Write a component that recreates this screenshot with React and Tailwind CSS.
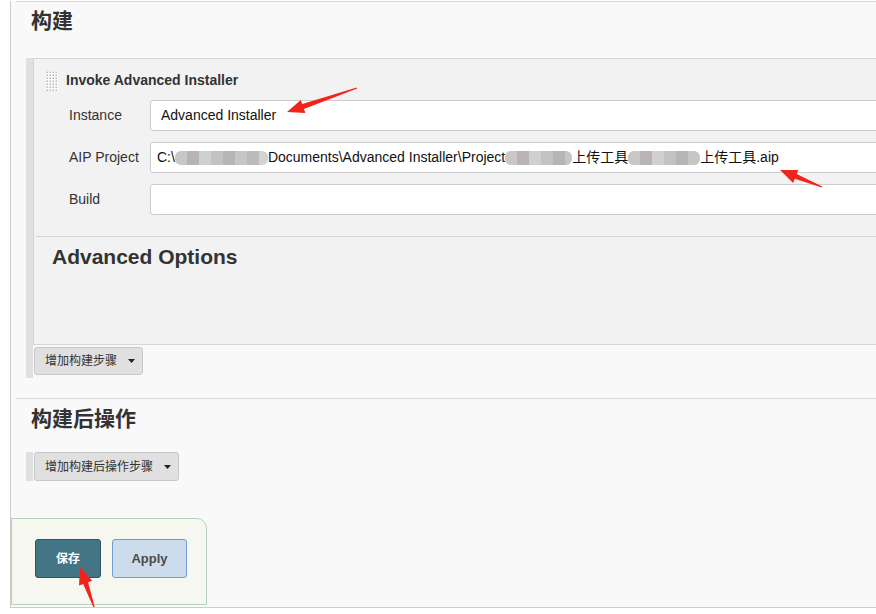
import React from "react";

// red annotation arrow, tip first then tail
function arrowPoints(tip, tail) {
  const dx = tail[0] - tip[0];
  const dy = tail[1] - tip[1];
  const len = Math.hypot(dx, dy);
  const ux = dx / len;
  const uy = dy / len;
  const nx = -uy;
  const ny = ux;
  const hl = 17;
  const hw = 7;
  const sw = 2.6;
  const bx = tip[0] + ux * hl;
  const by = tip[1] + uy * hl;
  const pts = [
    [tip[0], tip[1]],
    [bx + nx * hw, by + ny * hw],
    [bx + nx * sw, by + ny * sw],
    [tail[0] + nx * 0.6, tail[1] + ny * 0.6],
    [tail[0] - nx * 0.6, tail[1] - ny * 0.6],
    [bx - nx * sw, by - ny * sw],
    [bx - nx * hw, by - ny * hw],
  ];
  return pts.map((p) => p[0].toFixed(1) + "," + p[1].toFixed(1)).join(" ");
}

const mosaicGrays = ["#c9c7c5", "#b9b4b2", "#cfd0d0", "#c2c1c3", "#b8b3b6", "#c6c6c4", "#bdbbb9", "#d2d3d3"];

function Mosaic({ width }) {
  const count = Math.ceil(width / 12);
  return (
    <span className="inline-flex h-[14px] items-center align-middle rounded-[6px] bg-[#f4f4f4] overflow-hidden" style={{ width }}>
      {Array.from({ length: count }).map((_, i) => (
        <span key={i} className="h-[14px] w-[12px] shrink-0" style={{ background: mosaicGrays[i % mosaicGrays.length] }} />
      ))}
    </span>
  );
}

function Handle() {
  return (
    <svg width="12" height="20" viewBox="0 0 12 20" className="shrink-0">
      <rect width="12" height="20" fill="#fafafa" />
      {Array.from({ length: 7 }).map((_, r) =>
        Array.from({ length: 4 }).map((_, c) => (
          <rect key={r + "-" + c} x={c * 3 + 0.5} y={r * 3 + 0.5} width="1.5" height="1.5" fill="#b9b9b9" />
        ))
      )}
    </svg>
  );
}

function Caret() {
  return (
    <svg width="7" height="4" viewBox="0 0 7 4" className="ml-[11px]">
      <path d="M0 0h7L3.5 4z" fill="#222" />
    </svg>
  );
}

function Row({ label, children, pl = "pl-[10px]" }) {
  return (
    <div className="flex h-[31px] mb-[11px] items-center">
      <div className="w-[81px] pl-[35px] box-content text-[14px] text-[#333] self-start pt-[5px]">{label}</div>
      <div className={`flex-1 h-[31px] flex items-center bg-white border border-[#cccccc] rounded-[3px] text-[14px] text-[#111] whitespace-nowrap ${pl}`}>
        {children}
      </div>
    </div>
  );
}

export default function App() {
  return (
    <div className="relative w-[876px] h-[614px] overflow-hidden bg-white font-['Liberation_Sans','Noto_Sans_CJK_SC',sans-serif]">
      <div className="ml-[10px] w-[1000px] h-[607px] border-l border-b border-[#cccccc] bg-[#f9f9f9]">
        {/* 构建 */}
        <div className="ml-[5px] mt-px border-t border-[#d9d9d9]">
          <h2 className="mt-[8px] pl-[15px] text-[21px] leading-[21px] font-bold text-[#333]">构建</h2>
        </div>

        <div className="ml-[15px] mt-[27px] border-l-[7px] border-[#e0e0e0] pb-[3px]">
          <div className="border-l border-t border-b border-[#d5d5d5] bg-[#f2f2f2]">
            <div className="h-[41px] flex items-center pl-[12px] pt-[2px] gap-[8px]">
              <Handle />
              <span className="text-[14px] font-bold text-[#333]">Invoke Advanced Installer</span>
            </div>
            <Row label="Instance">Advanced Installer</Row>
            <Row label="AIP Project" pl="pl-[6px]">
              <span>C:\</span>
              <Mosaic width={93} />
              <span>Documents\Advanced Installer\Project</span>
              <Mosaic width={67} />
              <span>上传工具</span>
              <Mosaic width={72} />
              <span>上传工具.aip</span>
            </Row>
            <Row label="Build"></Row>
            <div className="mt-[21px] ml-[2px] border-t border-[#d5d5d5] h-[108px]">
              <h3 className="mt-[8px] pl-[16px] text-[21px] leading-[24px] font-bold text-[#333]">Advanced Options</h3>
            </div>
          </div>
          <button className="mt-[2px] ml-px h-[28px] w-[109px] flex items-center pl-[10px] bg-[#e0e0e0] border border-[#c8c8c8] rounded-[3px] text-[12px] text-[#333]">
            增加构建步骤
            <Caret />
          </button>
        </div>

        {/* 构建后操作 */}
        <div className="ml-[5px] mt-[20px] border-t border-[#d9d9d9]">
          <h2 className="mt-[9px] pl-[15px] text-[21px] leading-[21px] font-bold text-[#333]">构建后操作</h2>
        </div>

        <div className="ml-[15px] mt-[23px] border-l-[7px] border-[#e0e0e0] w-[153px]">
          <button className="ml-px h-[29px] w-[145px] flex items-center pl-[10px] bg-[#e0e0e0] border border-[#c8c8c8] rounded-[3px] text-[12px] text-[#333]">
            增加构建后操作步骤
            <Caret />
          </button>
        </div>

        {/* bottom bar */}
        <div className="mt-[37px] w-[196px] h-[87px] border border-[#b2d4bf] rounded-tr-[10px] bg-[#f6f7ef] flex items-start pt-[20px] pl-[23px] gap-[11px]">
          <button className="h-[39px] w-[66px] bg-[#437585] border border-[#2f5563] rounded-[3px] text-[12px] font-bold text-white">
            保存
          </button>
          <button className="h-[39px] w-[75px] bg-[#ccdcec] border border-[#6c9ed4] rounded-[3px] text-[13px] font-bold text-[#4a4a4a]">
            Apply
          </button>
        </div>
      </div>

      <svg className="absolute inset-0 pointer-events-none" width="876" height="614">
        <polygon points={arrowPoints([287, 112], [357, 88])} fill="#f2231b" />
        <polygon points={arrowPoints([780, 170], [822, 187])} fill="#f2231b" />
        <polygon points={arrowPoints([80, 567], [94, 607])} fill="#f2231b" />
      </svg>
    </div>
  );
}
